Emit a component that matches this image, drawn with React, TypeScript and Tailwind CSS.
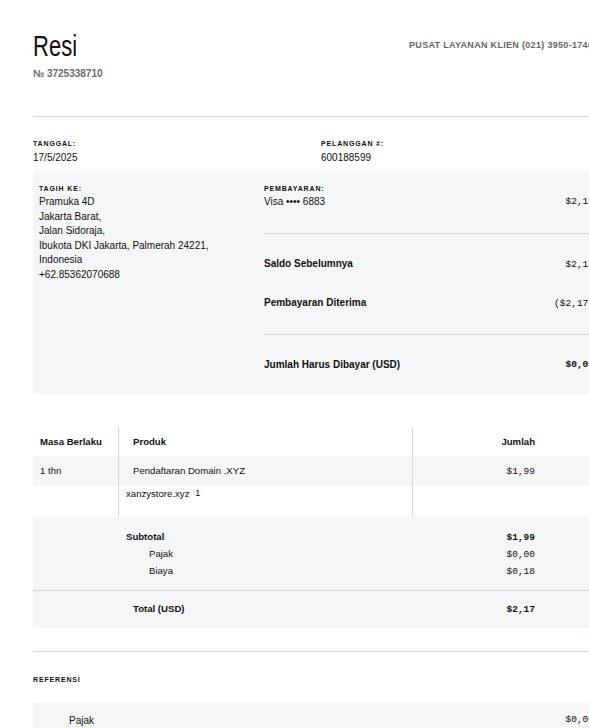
const sans = "font-['Liberation_Sans',Arial,sans-serif]";
const mono = "font-['Liberation_Mono','Courier_New',monospace]";

function Label({ children }: { children: React.ReactNode }) {
  return (
    <div className="text-[7px] font-bold uppercase leading-[10px] tracking-[0.12em] text-[#111]">
      {children}
    </div>
  );
}

function Amount({ children, bold }: { children: React.ReactNode; bold?: boolean }) {
  return (
    <span className={`${mono} text-[9.5px] text-[#111] ${bold ? "font-bold" : ""}`}>{children}</span>
  );
}

const address = [
  "Pramuka 4D",
  "Jakarta Barat,",
  "Jalan Sidoraja,",
  "Ibukota DKI Jakarta, Palmerah 24221,",
  "Indonesia",
  "+62.85362070688",
];

export default function App() {
  return (
    <div className={`w-full overflow-hidden bg-white ${sans} text-[#111]`}>
      <div className="w-[605px] pl-[33px] pt-[29px]">
        <div className="flex items-start justify-between">
          <div>
            <h1 className="inline-block origin-left scale-x-[0.76] text-[29px] leading-[34px] font-normal">
              Resi
            </h1>
            <div className="mt-[5px] text-[10px] font-bold leading-[12px] text-[#6b6b6b]">
              № 3725338710
            </div>
          </div>
          <div className="mt-[10px] w-[196px] text-[9px] font-bold uppercase tracking-[0.035em] whitespace-nowrap text-[#666]">
            Pusat Layanan Klien (021) 3950-1746
          </div>
        </div>

        <div className="mt-[36px] h-px bg-[#d6d6d6]" />

        <div className="mt-[22px] grid grid-cols-[288px_1fr]">
          <div>
            <Label>Tanggal:</Label>
            <div className="mt-[2px] text-[10px] leading-[14px]">17/5/2025</div>
          </div>
          <div>
            <Label>Pelanggan #:</Label>
            <div className="mt-[2px] text-[10px] leading-[14px]">600188599</div>
          </div>
        </div>

        <div className="mt-[4px] grid grid-cols-[231px_1fr] bg-[#f5f6f8] pb-[22px]">
          <div className="pl-[6px] pt-[15px]">
            <Label>Tagih Ke:</Label>
            <div className="mt-[1px] text-[10px] leading-[14.6px]">
              {address.map((l) => (
                <div key={l}>{l}</div>
              ))}
            </div>
          </div>
          <div className="pt-[15px] pr-[11px]">
            <Label>Pembayaran:</Label>
            <div className="mt-[1px] flex justify-between text-[10px] leading-[14px]">
              <span>Visa •••• 6883</span>
              <Amount>$2,17</Amount>
            </div>
            <div className="mt-[24px] h-px bg-[#d6d6d6]" />
            <div className="mt-[23px] flex justify-between text-[10px] font-bold leading-[14px]">
              <span>Saldo Sebelumnya</span>
              <span className="font-normal"><Amount>$2,17</Amount></span>
            </div>
            <div className="mt-[24px] flex justify-between text-[10px] font-bold leading-[14px]">
              <span>Pembayaran Diterima</span>
              <span className="font-normal"><Amount>($2,17)</Amount></span>
            </div>
            <div className="mt-[23px] h-px bg-[#d6d6d6]" />
            <div className="mt-[23px] flex justify-between text-[10px] font-bold leading-[14px]">
              <span>Jumlah Harus Dibayar (USD)</span>
              <Amount bold>$0,00</Amount>
            </div>
          </div>
        </div>

        <div className="mt-[33px] text-[9.6px]">
          <div className="grid grid-cols-[86px_294px_1fr]">
            <div className="border-r border-[#d6d6d6] pl-[7px] pt-[8px] h-[29px] font-bold">Masa Berlaku</div>
            <div className="border-r border-[#d6d6d6] pl-[14px] pt-[8px] font-bold">Produk</div>
            <div className="pr-[70px] pt-[8px] text-right font-bold">Jumlah</div>

            <div className="col-span-3 grid grid-cols-[86px_294px_1fr] bg-[#f5f6f8]">
              <div className="border-r border-[#d6d6d6] pl-[7px] h-[30px] pt-[8px]">1 thn</div>
              <div className="border-r border-[#d6d6d6] pl-[14px] pt-[8px]">Pendaftaran Domain .XYZ</div>
              <div className="pr-[70px] pt-[8px] text-right"><Amount>$1,99</Amount></div>
            </div>

            <div className="border-r border-[#d6d6d6] h-[31px]" />
            <div className="border-r border-[#d6d6d6] pl-[7px] pt-[1px]">
              xanzystore.xyz <sup className="relative -top-[1px] text-[9px] ml-[3px]">1</sup>
            </div>
            <div />
          </div>

          <div className="bg-[#f5f6f8]">
            <div className="flex pt-[13px] pb-[9px]">
              <div className="w-[452px] pl-[93px]">
                <div className="h-[17px] font-bold">Subtotal</div>
                <div className="h-[17px] pl-[23px]">Pajak</div>
                <div className="h-[17px] pl-[23px]">Biaya</div>
              </div>
              <div className="w-[50px] text-right">
                <div className="h-[17px]"><Amount bold>$1,99</Amount></div>
                <div className="h-[17px]"><Amount>$0,00</Amount></div>
                <div className="h-[17px]"><Amount>$0,18</Amount></div>
              </div>
            </div>
            <div className="h-px bg-[#d6d6d6]" />
            <div className="flex h-[37px] pt-[11px]">
              <div className="w-[452px] pl-[100px] font-bold">Total (USD)</div>
              <div className="w-[50px] text-right"><Amount bold>$2,17</Amount></div>
            </div>
          </div>
        </div>

        <div className="mt-[23px] h-px bg-[#d6d6d6]" />
        <div className="mt-[23px]">
          <Label>Referensi</Label>
        </div>
        <div className="mt-[18px] flex justify-between bg-[#f5f6f8] pl-[36px] pr-[11px] pt-[10px] pb-[14px] text-[10px]">
          <span>Pajak</span>
          <Amount>$0,00</Amount>
        </div>
      </div>
    </div>
  );
}
